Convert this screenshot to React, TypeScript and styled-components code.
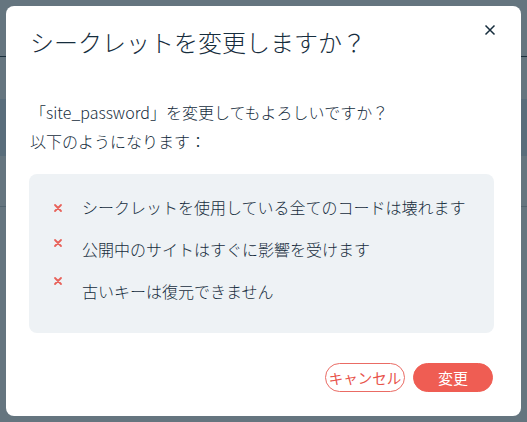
import React from 'react';
import styled, { createGlobalStyle } from 'styled-components';

const GlobalStyle = createGlobalStyle`
  html, body {
    margin: 0;
    padding: 0;
    width: 100%;
    height: 100%;
    overflow: hidden;
  }
  body {
    font-family: "Noto Sans CJK JP", "Noto Sans", sans-serif;
    font-weight: 300;
    color: #162d3d;
  }
`;

const Page = styled.div`
  width: 527px;
  height: 422px;
  background: #fff;
`;

const PageHeader = styled.div`
  height: 56px;
  border-bottom: 1px solid #20303c;
`;

const PageBand = styled.div`
  margin-top: 42px;
  height: 57px;
  background: #dce8f4;
`;

const PageRow = styled.div`
  height: 30px;
  margin-top: 20px;
  border-bottom: 1px solid #c8ced4;
  font-size: 16px;
  line-height: 30px;
  color: #1a3f66;
  text-indent: -8px;
`;

const Backdrop = styled.div`
  position: fixed;
  inset: 0;
  background: rgba(22, 45, 61, 0.66);
`;

const Dialog = styled.div`
  position: fixed;
  top: 6px;
  left: 6px;
  width: 515px;
  height: 410px;
  box-sizing: border-box;
  background: #fff;
  border-radius: 8px;
  padding: 18px 27px 0 23px;
  display: flex;
  flex-direction: column;
`;

const Header = styled.div`
  display: flex;
  justify-content: space-between;
  align-items: flex-start;
`;

const Title = styled.h2`
  margin: 0 0 0 1px;
  font-size: 24px;
  line-height: 36px;
  font-weight: 300;
  color: #162d3d;
`;

const CloseButton = styled.button`
  border: none;
  background: none;
  padding: 0;
  margin: -6px -8px 0 0;
  width: 24px;
  height: 24px;
  display: flex;
  align-items: center;
  justify-content: center;
  cursor: pointer;
`;

const Message = styled.p`
  margin: 38px 0 0 1px;
  font-size: 16px;
  line-height: 29px;
  color: #162d3d;
`;

const Consequences = styled.ul`
  list-style: none;
  margin: 18px 0 0;
  padding: 12px 24px 21px 24px;
  background: #eef2f5;
  border-radius: 8px;
`;

const Item = styled.li`
  display: flex;
  align-items: center;
  height: 42px;
  font-size: 16px;
  color: #162d3d;
`;

const Cross = styled.span<{ $shift: number }>`
  width: 10px;
  height: 10px;
  display: flex;
  margin-right: 19px;
  transform: translateY(${p => p.$shift}px);
`;

const Footer = styled.div`
  margin-top: 30px;
  display: flex;
  justify-content: flex-end;
  gap: 8px;
  padding-right: 1px;
`;

const Button = styled.button<{ $primary?: boolean }>`
  height: 29px;
  min-width: 80px;
  padding: 0 2px;
  border-radius: 15px;
  font-family: "Noto Sans CJK JP", "Noto Sans", sans-serif;
  font-size: ${p => (p.$primary ? '15px' : '14.5px')};
  font-weight: 400;
  line-height: 27px;
  cursor: pointer;
  border: 1px solid ${p => (p.$primary ? '#ef5d53' : '#ea6b64')};
  background: ${p => (p.$primary ? '#ef5d53' : '#fff')};
  color: ${p => (p.$primary ? '#fff' : '#e8544c')};
`;

const items = [
  { text: 'シークレットを使用している全てのコードは壊れます', shift: 1 },
  { text: '公開中のサイトはすぐに影響を受けます', shift: -6 },
  { text: '古いキーは復元できません', shift: -10 },
];

const CrossIcon = () => (
  <svg width="10" height="10" viewBox="0 0 10 10">
    <path d="M2 2 L8 8 M8 2 L2 8" stroke="#e8625a" strokeWidth="1.8" strokeLinecap="round" />
  </svg>
);

const App = () => {
  return (
    <>
      <GlobalStyle />
      <Page>
        <PageHeader />
        <PageBand />
        <PageRow>r</PageRow>
      </Page>
      <Backdrop />
      <Dialog role="dialog">
        <Header>
          <Title>シークレットを変更しますか？</Title>
          <CloseButton aria-label="close">
            <svg width="12" height="12" viewBox="0 0 12 12">
              <path d="M1.5 1.5 L10.5 10.5 M10.5 1.5 L1.5 10.5" stroke="#162d3d" strokeWidth="1.5" />
            </svg>
          </CloseButton>
        </Header>
        <Message>
          「site_password」を変更してもよろしいですか？
          <br />
          以下のようになります：
        </Message>
        <Consequences>
          {items.map(item => (
            <Item key={item.text}>
              <Cross $shift={item.shift}>
                <CrossIcon />
              </Cross>
              {item.text}
            </Item>
          ))}
        </Consequences>
        <Footer>
          <Button>キャンセル</Button>
          <Button $primary>変更</Button>
        </Footer>
      </Dialog>
    </>
  );
};

export default App;
